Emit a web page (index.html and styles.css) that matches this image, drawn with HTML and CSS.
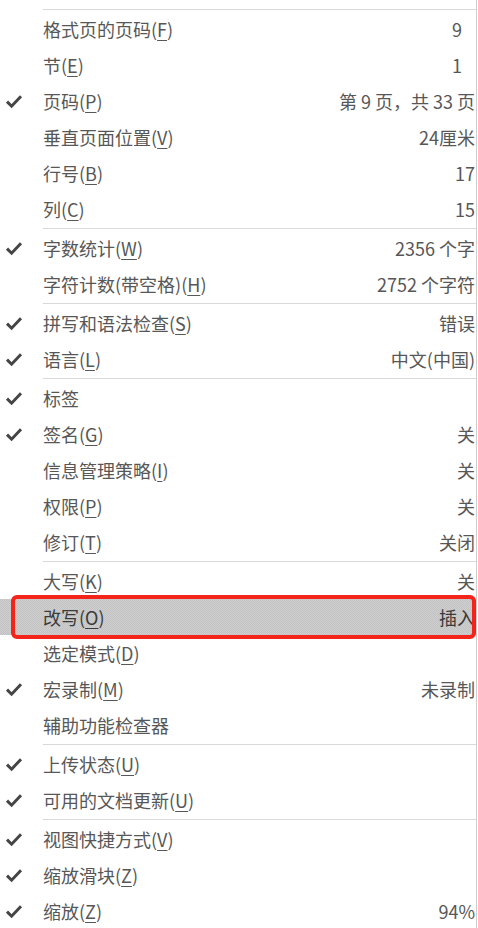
FILE: index.html
```html
<!DOCTYPE html>
<html lang="zh-CN">
<head>
    <meta charset="UTF-8">
    <meta name="viewport" content="width=device-width, initial-scale=1.0">
    <title>自定义状态栏</title>
    <link rel="stylesheet" href="styles.css">
</head>
<body>

    <!-- 状态栏右键菜单 -->
    <div class="menu">
        <div class="sep"></div>
        <div class="item"><span class="check"></span><span class="label">格式页的页码(<u>F</u>)</span><span class="value short">9</span></div>
        <div class="item"><span class="check"></span><span class="label">节(<u>E</u>)</span><span class="value short">1</span></div>
        <div class="item on"><span class="check"></span><span class="label">页码(<u>P</u>)</span><span class="value">第 9 页，共 33 页</span></div>
        <div class="item"><span class="check"></span><span class="label">垂直页面位置(<u>V</u>)</span><span class="value">24厘米</span></div>
        <div class="item"><span class="check"></span><span class="label">行号(<u>B</u>)</span><span class="value">17</span></div>
        <div class="item"><span class="check"></span><span class="label">列(<u>C</u>)</span><span class="value">15</span></div>
        <div class="sep"></div>
        <div class="item on"><span class="check"></span><span class="label">字数统计(<u>W</u>)</span><span class="value">2356 个字</span></div>
        <div class="item"><span class="check"></span><span class="label">字符计数(带空格)(<u>H</u>)</span><span class="value">2752 个字符</span></div>
        <div class="sep"></div>
        <div class="item on"><span class="check"></span><span class="label">拼写和语法检查(<u>S</u>)</span><span class="value">错误</span></div>
        <div class="item on"><span class="check"></span><span class="label">语言(<u>L</u>)</span><span class="value">中文(中国)</span></div>
        <div class="sep"></div>
        <div class="item on"><span class="check"></span><span class="label">标签</span><span class="value"></span></div>
        <div class="item on"><span class="check"></span><span class="label">签名(<u>G</u>)</span><span class="value">关</span></div>
        <div class="item"><span class="check"></span><span class="label">信息管理策略(<u>I</u>)</span><span class="value">关</span></div>
        <div class="item"><span class="check"></span><span class="label">权限(<u>P</u>)</span><span class="value">关</span></div>
        <div class="item"><span class="check"></span><span class="label">修订(<u>T</u>)</span><span class="value">关闭</span></div>
        <div class="sep"></div>
        <div class="item"><span class="check"></span><span class="label">大写(<u>K</u>)</span><span class="value">关</span></div>
        <div class="item hover"><span class="check"></span><span class="label">改写(<u>O</u>)</span><span class="value">插入</span></div>
        <div class="item"><span class="check"></span><span class="label">选定模式(<u>D</u>)</span><span class="value"></span></div>
        <div class="item on"><span class="check"></span><span class="label">宏录制(<u>M</u>)</span><span class="value">未录制</span></div>
        <div class="item"><span class="check"></span><span class="label">辅助功能检查器</span><span class="value"></span></div>
        <div class="sep"></div>
        <div class="item on"><span class="check"></span><span class="label">上传状态(<u>U</u>)</span><span class="value"></span></div>
        <div class="item on"><span class="check"></span><span class="label">可用的文档更新(<u>U</u>)</span><span class="value"></span></div>
        <div class="sep"></div>
        <div class="item on"><span class="check"></span><span class="label">视图快捷方式(<u>V</u>)</span><span class="value"></span></div>
        <div class="item on"><span class="check"></span><span class="label">缩放滑块(<u>Z</u>)</span><span class="value"></span></div>
        <div class="item on"><span class="check"></span><span class="label">缩放(<u>Z</u>)</span><span class="value">94%</span></div>
    </div>

    <script>
        // 给勾选的项目加上对勾
        const tick = '<svg width="18" height="15" viewBox="0 0 18 15"><path d="M2 7.6 L6.6 12.2 L16 2.2" fill="none" stroke="#454545" stroke-width="3"/></svg>';
        document.querySelectorAll(".item.on .check").forEach(el => {
            el.innerHTML = tick;
        });
    </script>

</body>
</html>
```

FILE: styles.css
```css
body { margin: 0; background: #fff; font-family: "Noto Sans CJK SC", "Microsoft YaHei", sans-serif; }
.menu { width: 477px; height: 928px; overflow: hidden; padding-top: 8px; box-sizing: border-box; border-right: 1px solid #cfcfcf; color: #575757; font-size: 18px; }
.sep { height: 1px; margin: 1px 0 1px 43px; background: #d9d9d9; }
.item { position: relative; height: 36px; display: grid; grid-template-columns: 43px 1fr auto; align-items: center; white-space: nowrap; }
.check { display: flex; padding-left: 5px; padding-top: 1px; }
.label u, .value u { text-underline-offset: 3px; text-decoration-thickness: 1px; }
.value { padding-right: 1px; }
.value.short { padding-right: 14px; }
.hover { background: repeating-conic-gradient(#c2c2c2 0 25%, #cfcfcf 0 50%) 0 0 / 2px 2px; color: #3a3a3a; }
.hover::after { content: ""; position: absolute; left: 11px; right: 0; top: -4px; bottom: -4px; border: 4px solid #f4241b; border-radius: 6px; }
```
